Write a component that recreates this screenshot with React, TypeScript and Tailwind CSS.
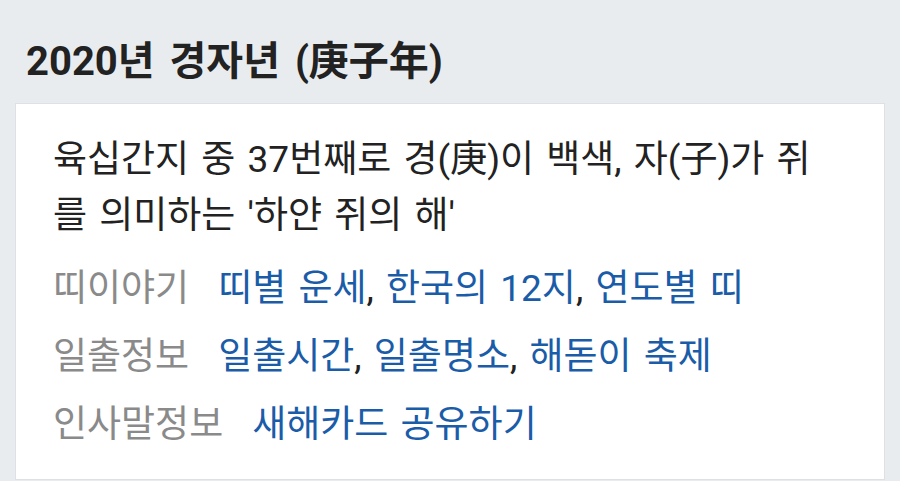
export default function App() {
  const font = { fontFamily: 'Roboto, "Noto Sans CJK KR", sans-serif' };
  const rows = [
    { label: '띠이야기', links: ['띠별 운세', '한국의 12지', '연도별 띠'] },
    { label: '일출정보', links: ['일출시간', '일출명소', '해돋이 축제'] },
    { label: '인사말정보', links: ['새해카드 공유하기'] },
  ];

  return (
    <div className="w-[900px] h-[481px] overflow-hidden bg-[#e9ecef] pt-[36px]" style={font}>
      <h1 className="px-[26px] text-[40px] leading-[52px] font-bold text-[#222] mb-[15px] [word-spacing:5px]">
        2020년 경자년 (庚子年)
      </h1>
      <div className="mx-[15px] bg-white border border-[#dde0e4] pl-[37px] pr-[40px] pt-[28px] pb-[20px] [word-spacing:3px]">
        <p className="text-[37px] leading-[56px] text-[#222]">
          육십간지 중 37번째로 경(庚)이 백색, 자(子)가 쥐를 의미하는 '하얀 쥐의 해'
        </p>
        <div className="mt-[11px]">
          {rows.map((row) => (
            <div key={row.label} className="flex text-[37px] leading-[68px] whitespace-nowrap">
              <span className="text-[#8a8a8a] mr-[29px]">{row.label}</span>
              <span className="text-[#222]">
                {row.links.map((link, i) => (
                  <span key={link}>
                    {i > 0 && ', '}
                    <a className="text-[#1a5ca8]">{link}</a>
                  </span>
                ))}
              </span>
            </div>
          ))}
        </div>
      </div>
    </div>
  );
}
